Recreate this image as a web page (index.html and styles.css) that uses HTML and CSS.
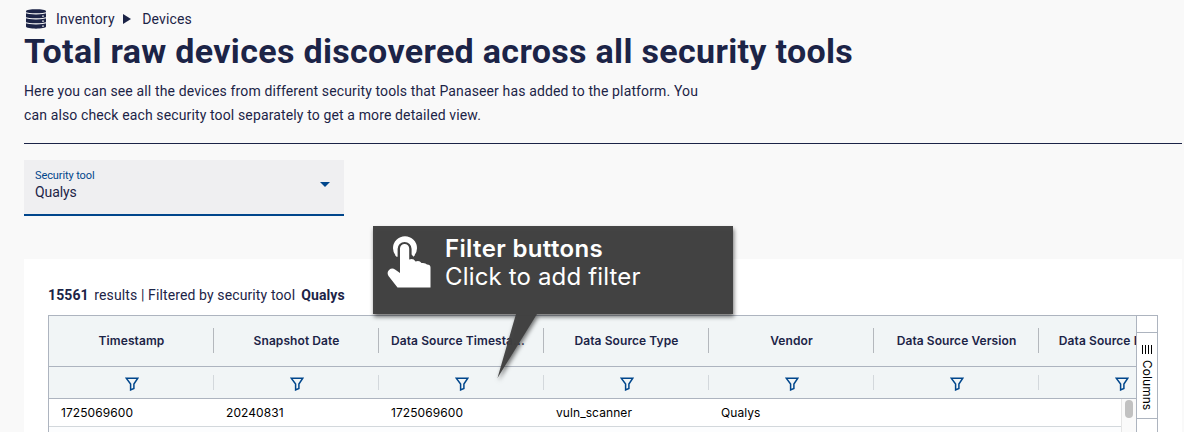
FILE: index.html
```
<!DOCTYPE html>
<html lang="en">
<head>
    <meta charset="UTF-8">
    <meta name="viewport" content="width=device-width, initial-scale=1.0">
    <title>Devices</title>
    <link rel="stylesheet" href="styles.css">
</head>
<body>
    <svg class="sprite" width="0" height="0">
        <symbol id="funnel" viewBox="0 0 14 14">
            <path d="M1.2 1.2H12.8L8.9 7V11.4L5.6 12.9V7Z" fill="none" stroke="currentColor" stroke-width="1.5"/>
        </symbol>
    </svg>

    <div class="page">
        <header class="header">
            <nav class="breadcrumb">
                <svg class="db-icon" width="22" height="20" viewBox="0 0 22 20">
                    <path d="M1 2.2C1 -.4 21 -.4 21 2.2V17.6C21 20.4 1 20.4 1 17.6Z" fill="#1c2447"/>
                    <path d="M0 3.500C4 5.300 18 5.300 22 3.500M0 8.500C4 10.300 18 10.300 22 8.500M0 13.500C4 15.300 18 15.300 22 13.500" fill="none" stroke="#f9f9f9" stroke-width="1.1"/>
                    <path d="M17.2 7.2h1.6M17.2 12.2h1.6M17.2 17.2h1.6" stroke="#f9f9f9" stroke-width="1.2"/>
                </svg>
                <span class="crumb">Inventory</span>
                <svg class="crumb-arrow" width="8" height="10" viewBox="0 0 8 10"><path d="M0 0L8 5L0 10Z" fill="#1c2447"/></svg>
                <span class="crumb">Devices</span>
            </nav>
            <h1>Total raw devices discovered across all security tools</h1>
            <p class="intro">Here you can see all the devices from different security tools that Panaseer has added to the platform. You<br>can also check each security tool separately to get a more detailed view.</p>
        </header>

        <div class="select">
            <div>
                <div class="select-label">Security tool</div>
                <div class="select-value">Qualys</div>
            </div>
            <svg width="10" height="5" viewBox="0 0 10 5"><path d="M0 0H10L5 5Z" fill="#00468c"/></svg>
        </div>

        <section class="panel">
            <p class="summary"><b class="count">15561</b><span class="desc">results | Filtered by security tool</span><b>Qualys</b></p>

            <div class="grid">
                <div class="grid-main">
                    <div class="row head">
                        <div class="cell"><span>Timestamp</span></div>
                        <div class="cell"><span>Snapshot Date</span></div>
                        <div class="cell long"><span>Data Source Timesta...</span></div>
                        <div class="cell"><span>Data Source Type</span></div>
                        <div class="cell"><span>Vendor</span></div>
                        <div class="cell"><span>Data Source Version</span></div>
                        <div class="cell"><span>Data Source Instance</span></div>
                    </div>
                    <div class="row filters">
                        <div class="cell"><svg class="funnel"><use href="#funnel"/></svg></div>
                        <div class="cell"><svg class="funnel"><use href="#funnel"/></svg></div>
                        <div class="cell"><svg class="funnel"><use href="#funnel"/></svg></div>
                        <div class="cell"><svg class="funnel"><use href="#funnel"/></svg></div>
                        <div class="cell"><svg class="funnel"><use href="#funnel"/></svg></div>
                        <div class="cell"><svg class="funnel"><use href="#funnel"/></svg></div>
                        <div class="cell"><svg class="funnel"><use href="#funnel"/></svg></div>
                    </div>
                    <div class="grid-body">
                        <div class="rows">
                            <div class="row data">
                                <div class="cell">1725069600</div>
                                <div class="cell">20240831</div>
                                <div class="cell">1725069600</div>
                                <div class="cell">vuln_scanner</div>
                                <div class="cell">Qualys</div>
                                <div class="cell"></div>
                            </div>
                            <div class="row data odd"></div>
                        </div>
                        <div class="scrollbar"><div class="thumb"></div></div>
                    </div>
                </div>
                <div class="sidebar">
                    <div class="tab">
                        <div class="bars"></div>
                        <span>Columns</span>
                    </div>
                </div>
            </div>
        </section>

        <div class="callout">
            <svg class="callout-shape" width="360" height="156" viewBox="0 0 360 156">
                <path d="M0 0H360V88H164L124.500 152L143 88H0Z" fill="#404040" fill-opacity=".97"/>
            </svg>
            <div class="callout-content">
                <svg width="44" height="52" viewBox="0 0 44 52">
                    <path d="M9.500 20.700A12 12 0 1 1 26.500 20.700L24.600 18.500V13A7 7 0 0 0 10.600 13V20.700Z" fill="#fff"/>
                    <path d="M13 37V12.500A4.600 4.600 0 0 1 22.200 12.500V23.500Q26.500 22 28.500 25.500Q32.500 24 34.500 27Q38.500 26.500 40 28.500Q43.500 28.500 43.500 31.500V51.500H10.500L1.500 40Q-.5 36.500 2 34Q5 31.500 8 33.500Z" fill="#fff"/>
                </svg>
                <div class="callout-text"><b>Filter buttons</b><br>Click to add filter</div>
            </div>
        </div>
    </div>
</body>
</html>
```
FILE: styles.css
```
* {
    margin: 0;
    padding: 0;
    box-sizing: border-box;
}

body {
    font-family: Roboto, "Liberation Sans", sans-serif;
    background: #f9f9f9;
    color: #1c2447;
    overflow: hidden;
}

svg {
    display: block;
    flex: none;
}

.sprite {
    position: absolute;
}

.page {
    position: relative;
    height: 432px;
    padding: 9px 2px 0 24px;
    overflow: hidden;
}

.header {
    height: 135px;
    border-bottom: 1px solid #1c2447;
}

.breadcrumb {
    display: flex;
    align-items: center;
    height: 20px;
    padding-left: 1px;
    font-size: 14px;
    letter-spacing: 0.15px;
}

.db-icon {
    margin-right: 9px;
}

.crumb-arrow {
    margin: 0 11px 0 8.5px;
}

h1 {
    font-size: 34px;
    line-height: 44px;
    font-weight: 700;
    letter-spacing: 0.33px;
    white-space: nowrap;
}

.intro {
    margin-top: 6px;
    font-size: 14px;
    line-height: 24px;
    letter-spacing: 0.13px;
    white-space: nowrap;
}

.select {
    display: flex;
    justify-content: space-between;
    width: 320px;
    height: 56px;
    margin-top: 16px;
    padding: 9px 14px 0 11px;
    background: #efeff1;
    border-bottom: 2px solid #00468c;
}

.select > svg {
    margin-top: 13px;
}

.select-label {
    font-size: 11px;
    line-height: 13px;
    color: #00468c;
    letter-spacing: -0.1px;
}

.select-value {
    font-size: 14px;
    line-height: 20px;
    letter-spacing: -0.1px;
}

.panel {
    height: 240px;
    margin-top: 43px;
    padding: 26px 24px 0;
    background: #fff;
}

.summary {
    display: flex;
    height: 30px;
    font-size: 14px;
    line-height: 20px;
    letter-spacing: 0.12px;
    white-space: nowrap;
}

.summary .desc {
    margin: 0 6px 0 5.5px;
}

.grid {
    display: flex;
    height: 200px;
    border: 1px solid #adb4bf;
    font-family: Inter, "Liberation Sans", sans-serif;
    font-size: 12px;
    letter-spacing: 0.08px;
}

.grid-main {
    flex: 1;
    min-width: 0;
    overflow: hidden;
}

.row {
    display: flex;
}

.cell {
    flex: none;
    display: flex;
    align-items: center;
    width: 165px;
    padding: 0 12px;
}

.head,
.filters {
    background: #f1f5f6;
    border-bottom: 1px solid #adb4bf;
}

.head {
    height: 51px;
    font-weight: 600;
}

.filters {
    height: 32px;
    color: #00468c;
}

.head .cell,
.filters .cell {
    position: relative;
    justify-content: center;
}

.head .cell {
    padding-bottom: 2px;
}

.head .cell.long {
    justify-content: flex-start;
}

.head span {
    white-space: nowrap;
}

/* column separators, shorter than the row itself */
.head .cell::after,
.filters .cell::after {
    content: "";
    position: absolute;
    right: 0;
    top: 12px;
    width: 1px;
    height: 25px;
    background: #b4b8bd;
}

.filters .cell::after {
    top: 8px;
    height: 15px;
    background: #d3d8dc;
}

.funnel {
    width: 14px;
    height: 14px;
    margin-top: 3px;
}

.grid-body {
    display: flex;
}

.rows {
    flex: 1;
    min-width: 0;
    overflow: hidden;
}

.data {
    height: 28px;
    border-bottom: 1px solid #d3d8dc;
    color: #000;
}

.data.odd {
    background: #fcfdfe;
}

.scrollbar {
    width: 15px;
    padding: 1px 3px;
    background: #fafafa;
    border-left: 1px solid #e5e5e5;
}

.thumb {
    width: 8px;
    height: 18px;
    background: #c1c1c1;
    border-radius: 4px;
}

.sidebar {
    width: 21px;
    padding-top: 16px;
    border-left: 1px solid #adb4bf;
}

.tab {
    display: flex;
    flex-direction: column;
    align-items: center;
    height: 87px;
    padding-top: 12px;
    border: solid #adb4bf;
    border-width: 1px 0;
    color: #000;
    letter-spacing: 0.05px;
}

.bars {
    width: 10px;
    height: 9px;
    margin-bottom: 6px;
    background: repeating-linear-gradient(90deg, #000 0 1px, transparent 1px 3px);
}

.tab span {
    writing-mode: vertical-rl;
    line-height: 14px;
}

.callout {
    position: absolute;
    left: 373px;
    top: 226px;
    width: 360px;
    color: #fff;
    font-family: Inter, "Liberation Sans", sans-serif;
}

.callout-shape {
    position: absolute;
    overflow: visible;
    filter: drop-shadow(1px 3px 2px rgba(0, 0, 0, 0.55));
}

.callout-content {
    position: relative;
    display: flex;
    gap: 14px;
    padding: 10px 0 0 14px;
}

.callout-text {
    font-size: 24px;
    line-height: 28px;
    letter-spacing: 0.16px;
    margin-top: -1px;
    white-space: nowrap;
}

.callout-text b {
    font-weight: 600;
    letter-spacing: 0.35px;
}
```
